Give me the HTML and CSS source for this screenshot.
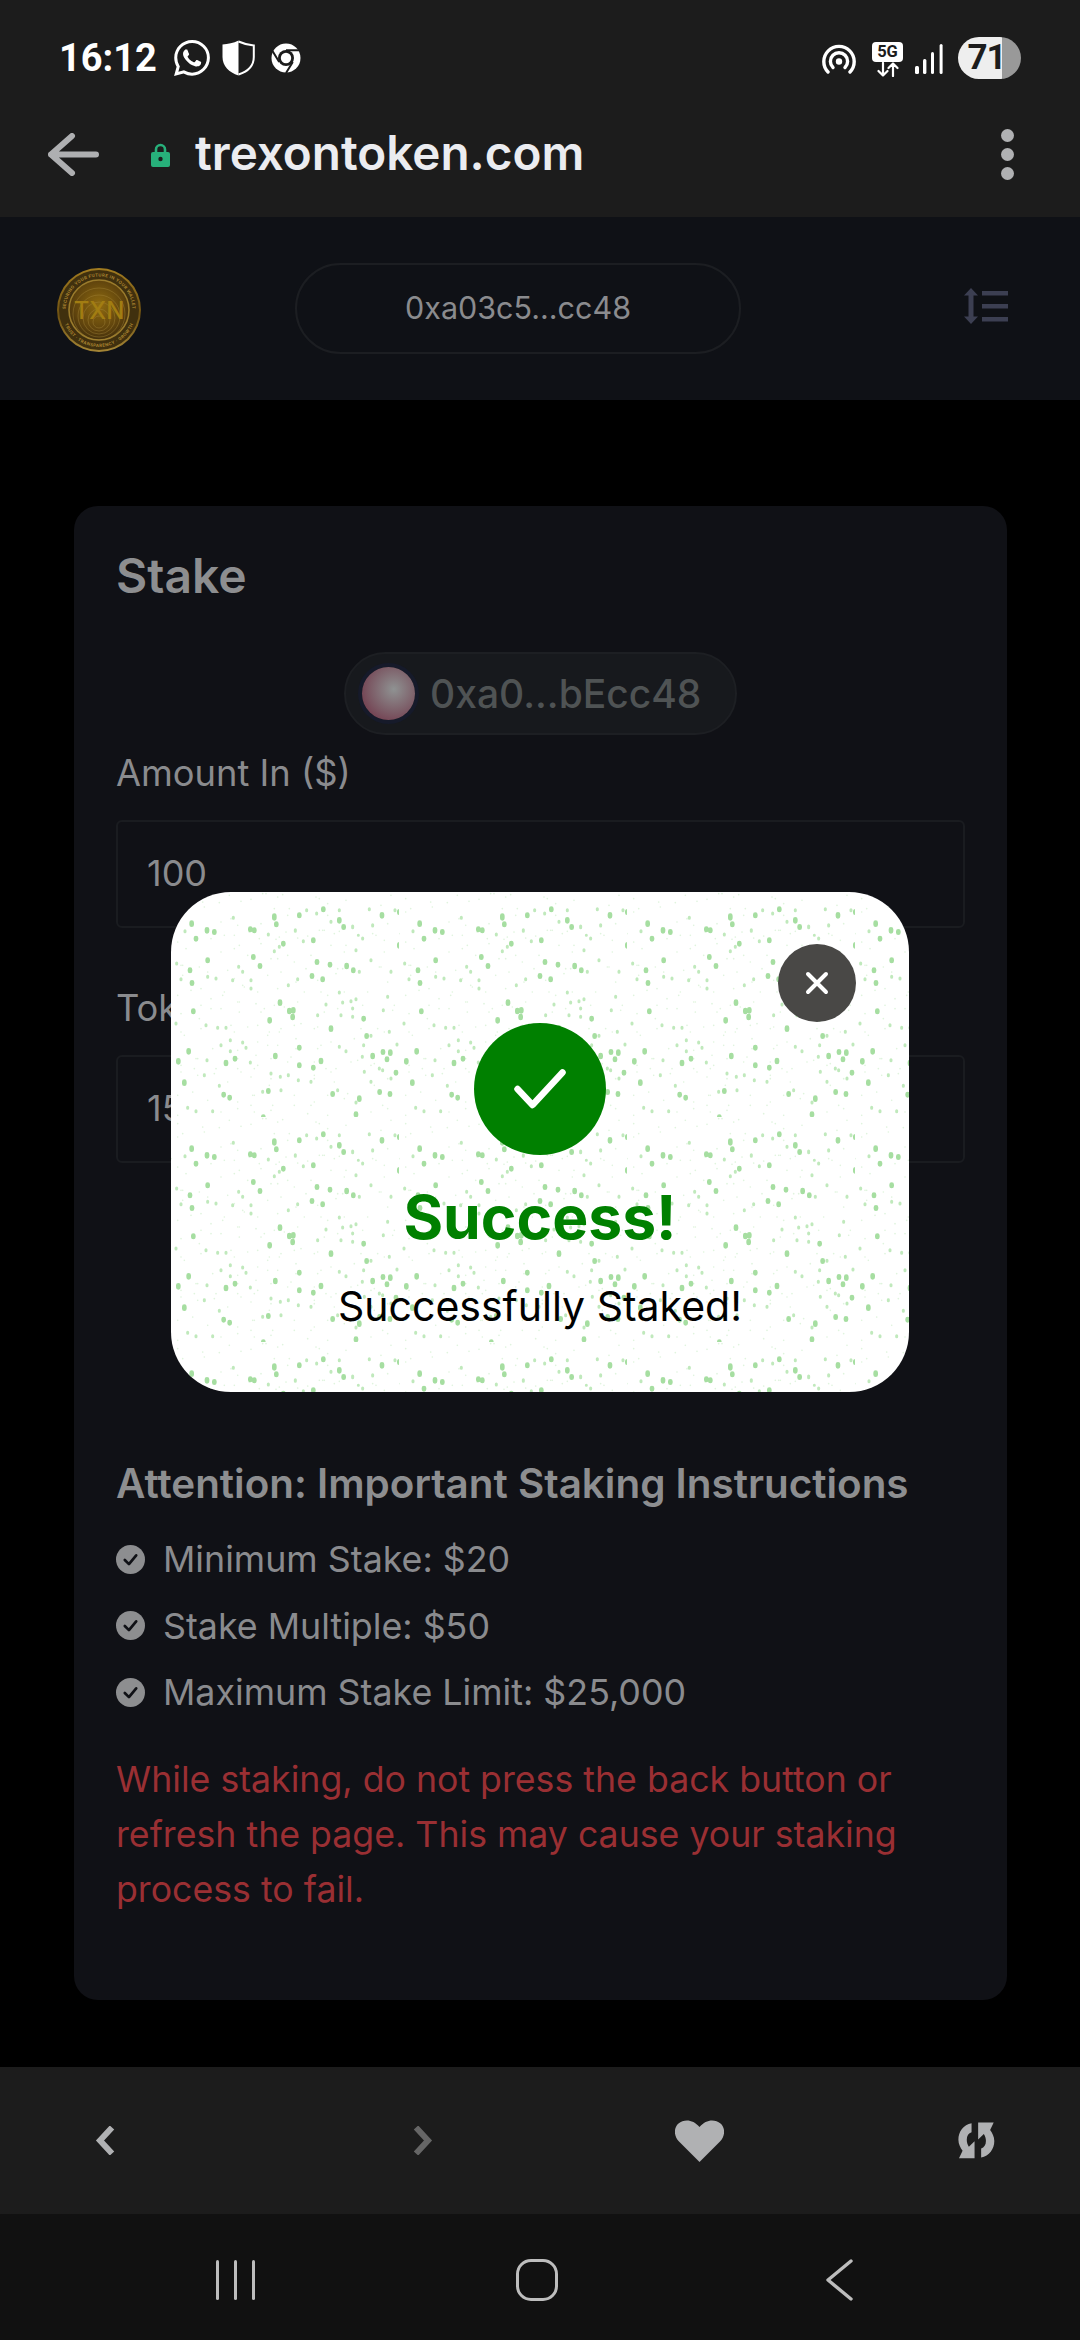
FILE: index.html
```html
<!DOCTYPE html>
<html lang="en">
<head>
<meta charset="utf-8">
<title>trexontoken.com</title>
<link rel="stylesheet" href="styles.css">
</head>
<body>
<div class="app">
  <header class="chrome">
    <div class="status">
      <div class="status-left">
        <span class="time">16:12</span>
        <svg class="ic-wa" viewBox="0 0 24 24"><path fill="#fff" d="M17.472 14.382c-.297-.149-1.758-.867-2.03-.967-.273-.099-.471-.148-.67.15-.197.297-.767.966-.94 1.164-.173.199-.347.223-.644.075-.297-.15-1.255-.463-2.39-1.475-.883-.788-1.48-1.761-1.653-2.059-.173-.297-.018-.458.13-.606.134-.133.298-.347.446-.52.149-.174.198-.298.298-.497.099-.198.05-.371-.025-.52-.075-.149-.669-1.612-.916-2.207-.242-.579-.487-.5-.669-.51-.173-.008-.371-.01-.57-.01-.198 0-.52.074-.792.372-.272.297-1.04 1.016-1.04 2.479 0 1.462 1.065 2.875 1.213 3.074.149.198 2.096 3.2 5.077 4.487.709.306 1.262.489 1.694.625.712.227 1.36.195 1.871.118.571-.085 1.758-.719 2.006-1.413.248-.694.248-1.289.173-1.413-.074-.124-.272-.198-.57-.347m-5.421 7.403h-.004a9.87 9.87 0 01-5.031-1.378l-.361-.214-3.741.982.998-3.648-.235-.374a9.86 9.86 0 01-1.51-5.26c.001-5.45 4.436-9.884 9.888-9.884 2.64 0 5.122 1.03 6.988 2.898a9.825 9.825 0 012.893 6.994c-.003 5.45-4.437 9.884-9.885 9.884m8.413-18.297A11.815 11.815 0 0012.05 0C5.495 0 .16 5.335.157 11.892c0 2.096.547 4.142 1.588 5.945L.057 24l6.305-1.654a11.882 11.882 0 005.683 1.448h.005c6.554 0 11.89-5.335 11.893-11.893a11.821 11.821 0 00-3.48-8.413Z"/></svg>
        <svg class="ic-shield" viewBox="0 0 33 36"><path fill="#fff" d="M16.5 0.5C11.5 3 6 4.2 0.5 4.5V17C0.5 26 7 32.5 16.5 35.5Z"/><path fill="none" stroke="#fff" stroke-width="2" d="M16.5 1.5C21.5 3.8 26.5 5 31.8 5.4V17C31.8 25.6 25.8 31.6 16.5 34.5"/></svg>
        <svg class="ic-chrome" viewBox="0 0 30 30"><circle cx="15" cy="15" r="14.5" fill="#fff"/><circle cx="15" cy="15" r="8" fill="#1c1c1c"/><circle cx="15" cy="15" r="5.2" fill="#fff"/><path fill="none" stroke="#1c1c1c" stroke-width="2" d="M15 7.2H28M21.8 19L15 30M8.2 19L1.5 8"/></svg>
      </div>
      <div class="status-right">
        <svg class="ic-hot" viewBox="0 0 34 30"><g fill="none" stroke="#fff" stroke-width="3.4" stroke-linecap="round"><path d="M6 28C2.8 24.8 1.8 21.5 1.8 17.6A15.2 15.2 0 0 1 32.2 17.6C32.2 21.5 31.2 24.8 28 28"/><path d="M11 23.5A8.6 8.6 0 1 1 23 23.5"/></g><circle cx="17" cy="17.5" r="3.2" fill="#fff"/></svg>
        <div class="five-g">
          <span class="five-g-box">5G</span>
          <svg class="five-g-arrows" viewBox="0 0 24 15"><path fill="none" stroke="#fff" stroke-width="2.2" stroke-linecap="round" stroke-linejoin="round" d="M7 1V13.5M2.5 9L7 13.5L11.5 9M17 14V1.5M12.5 6L17 1.5L21.5 6"/></svg>
        </div>
        <svg class="ic-signal" viewBox="0 0 28 30"><g fill="#fff"><rect x="0" y="22" width="4" height="8" rx="1.5"/><rect x="8" y="15" width="3.4" height="15" rx="1.5"/><rect x="16" y="8" width="3" height="22" rx="1.5"/><rect x="24.6" y="0" width="3" height="30" rx="1.5"/></g></svg>
        <div class="battery"><span class="battery-num">71</span></div>
      </div>
    </div>
    <div class="urlbar">
      <svg class="ic-back" viewBox="0 0 51 43"><path fill="none" stroke="#aeafb1" stroke-width="6" stroke-linecap="round" stroke-linejoin="round" d="M3 21.5H48M24 3L3 21.5L24 40"/></svg>
      <svg class="ic-lock" viewBox="0 0 19 24"><path fill="none" stroke="#27b07a" stroke-width="2.6" d="M5 11V6.5a4.5 4.5 0 0 1 9 0V11"/><rect y="9" width="19" height="15" rx="2" fill="#27b07a"/><circle cx="9.5" cy="16" r="2.2" fill="#1c1c1c"/></svg>
      <span class="url">trexontoken.com</span>
      <div class="kebab"><i></i><i></i><i></i></div>
    </div>
  </header>

  <div class="site-head">
    <svg class="logo" viewBox="0 0 84 84">
      <defs>
        <radialGradient id="coin" cx="50%" cy="42%" r="60%"><stop offset="0" stop-color="#8f6b10"/><stop offset=".7" stop-color="#5f430d"/><stop offset="1" stop-color="#3e2c0c"/></radialGradient>
        <linearGradient id="rim" x1="0" y1="0" x2="0" y2="1"><stop offset="0" stop-color="#a27c20"/><stop offset=".55" stop-color="#6f5212"/><stop offset="1" stop-color="#a58636"/></linearGradient>
        <path id="arcTop" d="M8.5 42A33.5 33.5 0 0 1 75.500 42"/>
        <path id="arcBot" d="M5 42A37 37 0 0 0 79 42"/>
      </defs>
      <circle cx="42" cy="42" r="42" fill="url(#rim)"/>
      <circle cx="42" cy="42" r="40" fill="#40300e"/>
      <circle cx="42" cy="42" r="30" fill="url(#coin)" stroke="#9a7b2c" stroke-width="1.6"/>
      <g fill="none" stroke="#a98b3e" stroke-width=".6" opacity=".65"><circle cx="42" cy="46" r="26"/><circle cx="42" cy="48" r="21"/><circle cx="42" cy="50" r="16"/><circle cx="42" cy="52" r="11"/><circle cx="42" cy="54" r="6"/></g>
      <text class="coin-small"><textPath href="#arcTop" startOffset="50%" text-anchor="middle">SECURING YOUR FUTURE IN YOUR WALLET</textPath></text>
      <text class="coin-small"><textPath href="#arcBot" startOffset="50%" text-anchor="middle">TRUST · TRANSPARENCY · GROWTH</textPath></text>
      <text class="coin-txn" x="42" y="51" text-anchor="middle">TXN</text>
    </svg>
    <div class="addr-pill">0xa03c5...cc48</div>
    <svg class="ic-menu" viewBox="0 0 44 36"><g fill="#3c3f52"><path d="M7 0L14 7.500H9.500V28.500H14L7 36L0 28.500H4.500V7.500H0Z"/><rect x="18" y="3" width="26" height="4.500"/><rect x="18" y="16" width="26" height="4.500"/><rect x="18" y="29" width="26" height="4.500"/></g></svg>
  </div>

  <main class="page">
    <section class="card">
      <h1 class="card-title">Stake</h1>
      <div class="wallet-row">
        <div class="wallet"><span class="avatar"></span><span class="wallet-addr">0xa0...bEcc48</span></div>
      </div>
      <label class="field-label">Amount In ($)</label>
      <div class="input">100</div>
      <label class="field-label second">Token Amount</label>
      <div class="input">15</div>
      <h2 class="att-title">Attention: Important Staking Instructions</h2>
      <ul class="rules">
        <li><svg class="ic-check" viewBox="0 0 28 28"><circle cx="14" cy="14" r="14" fill="#8d8e90"/><path fill="none" stroke="#101116" stroke-width="2.6" stroke-linecap="round" stroke-linejoin="round" d="M8.500 14.500L12.500 18.500L19.500 10"/></svg>Minimum Stake: $20</li>
        <li><svg class="ic-check" viewBox="0 0 28 28"><circle cx="14" cy="14" r="14" fill="#8d8e90"/><path fill="none" stroke="#101116" stroke-width="2.6" stroke-linecap="round" stroke-linejoin="round" d="M8.500 14.500L12.500 18.500L19.500 10"/></svg>Stake Multiple: $50</li>
        <li><svg class="ic-check" viewBox="0 0 28 28"><circle cx="14" cy="14" r="14" fill="#8d8e90"/><path fill="none" stroke="#101116" stroke-width="2.6" stroke-linecap="round" stroke-linejoin="round" d="M8.500 14.500L12.500 18.500L19.500 10"/></svg>Maximum Stake Limit: $25,000</li>
      </ul>
      <p class="warning">While staking, do not press the back button or refresh the page. This may cause your staking process to fail.</p>
    </section>
  </main>

  <div class="toolbar">
    <svg class="ic-chev" viewBox="0 0 20 29"><path fill="none" stroke="#b0b1b3" stroke-width="6" stroke-linejoin="miter" d="M17 1.500L5 14.500L17 27.500"/></svg>
    <svg class="ic-chev fwd" viewBox="0 0 20 29"><path fill="none" stroke="#666" stroke-width="6" stroke-linejoin="miter" d="M3 1.500L15 14.500L3 27.500"/></svg>
    <svg class="ic-heart" viewBox="0 0 49 42"><path fill="#b0b1b3" d="M24.500 42L4 21.500C-1.500 16 -1.300 7.500 3.500 3.500C9 -1.200 18 -1 24.500 7C31 -1 40 -1.200 45.500 3.500C50.300 7.500 50.500 16 45 21.500Z"/></svg>
    <svg class="ic-sync" viewBox="70 30 137 135"><g fill="#b0b1b3"><path d="M122 40C95 45 78 68 78 95C78 110 85 122 92 132L80 157H132V100L113 118C108 110 106 103 106 95C106 82 112 73 122 70Z"/><path d="M154 154C181 149 198 126 198 99C198 84 191 72 184 62L196 37H144V94L163 76C168 84 170 91 170 99C170 112 164 121 154 124Z"/></g></svg>
  </div>
  <nav class="sysnav">
    <div class="nav-recent"><i></i><i></i><i></i></div>
    <div class="nav-home"></div>
    <svg class="ic-navback" viewBox="0 0 27 42"><path fill="none" stroke="#bdbdbd" stroke-width="3.400" stroke-linecap="round" stroke-linejoin="round" d="M25 2L2 21L25 40"/></svg>
  </nav>

  <div class="modal">
    <svg class="speckle" aria-hidden="true">
      <defs>
        <pattern id="sp" patternUnits="userSpaceOnUse" width="228" height="225">
          <g transform="scale(.3333)" fill="none" stroke-linecap="round">
            <path id="spFine" stroke="#e0f4de" stroke-width="5" d="M20 20h.1M95 30h.1M145 32h.1M210 28h.1M240 22h.1M275 5h.1M335 8h.1M355 50h.1M435 15h.1M470 35h.1M525 25h.1M630 40h.1M660 10h.1M20 60h.1M150 90h.1M200 100h.1M270 95h.1M345 120h.1M455 115h.1M490 125h.1M615 130h.1M650 95h.1M20 150h.1M45 170h.1M150 180h.1M205 160h.1M270 155h.1M350 190h.1M480 160h.1M520 180h.1M640 180h.1M30 220h.1M85 225h.1M170 235h.1M290 250h.1M330 240h.1M405 230h.1M495 245h.1M630 225h.1M20 310h.1M60 295h.1M120 320h.1M160 300h.1M205 330h.1M280 350h.1M400 300h.1M470 310h.1M590 300h.1M670 340h.1M30 365h.1M85 380h.1M120 350h.1M205 360h.1M260 400h.1M325 420h.1M390 395h.1M430 410h.1M620 410h.1M40 430h.1M75 500h.1M125 470h.1M260 450h.1M320 460h.1M440 470h.1M480 450h.1M550 440h.1M30 540h.1M70 530h.1M130 545h.1M200 530h.1M260 520h.1M350 510h.1M465 530h.1M540 510h.1M610 515h.1M20 610h.1M65 600h.1M110 625h.1M200 630h.1M250 610h.1M305 640h.1M370 610h.1M420 640h.1M470 610h.1M530 605h.1M650 650h.1M20 670h.1M150 660h.1M250 660h.1M340 680h.1M410 665h.1M470 670h.1M600 660h.1"/>
            <use href="#spFine" transform="translate(170 110)"/>
            <use href="#spFine" transform="translate(-170 -110)"/>
            <path stroke="#c0e9bc" stroke-width="9" d="M42 116v3M187 76v3M292 126v3M310 176v3M325 163v3M373 113v5M397 146v3M437 63v3M407 53v3M545 102v5M562 130h.1M605 98v4M595 50v3M672 53v3M505 53v3M480 88v3M555 173v3M575 138v3M600 203v3M660 238v3M565 238v3M203 223v3M215 238v3M240 288v3M185 263v3M135 258v3M110 253v3M30 260v3M17 213v3M240 263v3M352 278v3M380 260v3M505 300v3M555 320v3M540 326v3M515 330v3M465 336v3M440 368v3M545 373v3M545 348v3M637 353v3M510 368v3M650 313v3M140 406v3M165 406v3M105 398v3M15 393v3M178 443v3M150 458v3M215 450v3M225 466v3M178 476v3M238 510v3M108 503v3M100 548v3M145 580v3M300 543v3M328 553v3M352 548v3M382 563v3M420 568v3M505 463v3M525 476v3M580 538v3M600 568v3M655 418v3M678 456v3M600 430v3M574 493v3M578 458v3M635 533v3M660 558v3M625 528v3M275 598v3M330 593v3M555 630v3M500 593v3M75 656v3M125 656v3M50 646v3M90 683v3"/>
            <path stroke="#a6dea1" stroke-width="14" d="M62 92v6M75 138v4M108 112v6M130 118v4M238 110v4M250 113v4M310 71v8M316 95v4M337 153v4M385 68v4M427 143v4M457 50v4M505 82v6M518 103v4M633 67v6M685 58v4M685 157v6M720 82v6M745 55v6M790 112v6M247 193v4M267 220v4M110 203v4M57 233v4M63 271v4M438 208v4M477 216v4M527 219v6M547 233v4M423 250v4M455 260v4M327 329v6M67 356v4M296 382v6M355 354v6M367 352v6M365 372v6M480 407v6M578 378v4M587 430v4M385 465v4M313 489v6M53 475v6M22 505v6M165 510v6M192 498v4M385 518v4M427 525v4M450 504v6M605 489v6M648 500v4M658 479v6M636 478v4M675 540v4M704 505v6M734 475v6M720 569v6M40 569v6M626 598v4M657 604v4M485 604v4M565 617v6M176 615v4M158 606v4M277 674v6M555 665v4M292 595v4"/>
          </g>
        </pattern>
      </defs>
      <rect class="speckle-fill" width="738" height="500"/>
    </svg>
    <button class="close" type="button" aria-label="Close"><svg viewBox="0 0 24 24"><path fill="none" stroke="#fff" stroke-width="4" stroke-linecap="round" d="M3 3L21 21M21 3L3 21"/></svg></button>
    <div class="modal-body">
      <div class="ok-circle"><svg viewBox="0 0 52 40"><path fill="none" stroke="#fff" stroke-width="6.500" stroke-linecap="round" stroke-linejoin="round" d="M3.500 20L18.500 36L48.500 3.500"/></svg></div>
      <div class="ok-title">Success!</div>
      <div class="ok-text">Successfully Staked!</div>
    </div>
  </div>
</div>
</body>
</html>
```
FILE: styles.css
```css
* { box-sizing: border-box; }
html, body { margin: 0; padding: 0; background: #000; }
body { font-family: Inter, "Noto Sans", sans-serif; }
.app { position: relative; width: 1080px; height: 2340px; display: flex; flex-direction: column; overflow: hidden; background: #000; }
svg { display: block; flex: none; }

/* browser chrome */
.chrome { height: 217px; background: #1c1c1c; flex: none; }
.status { height: 116px; padding: 36px 59px 0 59px; display: flex; justify-content: space-between; align-items: flex-start; }
.status-left { display: flex; align-items: center; height: 44px; }
.time { font-family: Roboto, sans-serif; font-weight: 700; font-size: 38px; color: #fff; line-height: 44px; width: 115px; }
.ic-wa { width: 36px; height: 36px; margin-right: 12px; }
.ic-shield { width: 33px; height: 36px; margin-right: 16px; }
.ic-chrome { width: 30px; height: 30px; }
.status-right { display: flex; align-items: center; height: 44px; }
.ic-hot { width: 34px; height: 30px; margin-right: 16px; margin-top: 2px; }
.five-g { width: 31px; margin-right: 12px; display: flex; flex-direction: column; align-items: center; margin-top: 2px; }
.five-g-box { width: 31px; height: 20px; border-radius: 4px; background: #fff; color: #1c1c1c; font: 700 16.5px/20px Roboto, sans-serif; text-align: center; }
.five-g-arrows { width: 24px; height: 15px; }
.ic-signal { width: 28px; height: 30px; margin-right: 15px; margin-top: 2px; }
.battery { width: 63px; height: 42px; border-radius: 21px; background: linear-gradient(90deg, #eeeeee 0 44px, #999 44px); display: flex; align-items: center; justify-content: center; padding-right: 6px; }
.battery-num { font: 700 35px/42px Roboto, sans-serif; color: #1c1c1c; letter-spacing: -1px; }

.urlbar { height: 101px; display: flex; align-items: center; padding: 0 0 24px 48px; position: relative; }
.ic-back { width: 51px; height: 43px; margin-right: 52px; }
.ic-lock { width: 19px; height: 24px; margin-right: 25px; }
.url { font-weight: 600; font-size: 47.6px; color: #ebecf0; line-height: 60px; flex: 1; margin-bottom: 4px; }
.kebab { display: flex; flex-direction: column; gap: 6px; margin-right: 66px; }
.kebab i { display: block; width: 13px; height: 13px; border-radius: 50%; background: #b0b1b3; }

/* site header */
.site-head { height: 183px; flex: none; background: #0f1116; display: flex; align-items: center; padding: 0 72px 0 57px; }
.logo { width: 84px; height: 84px; margin: 2px 154px 0 0; }
.coin-small { font: 700 4.300px Inter, sans-serif; fill: #a98330; letter-spacing: .35px; }
.coin-txn { font: 500 24px Inter, sans-serif; fill: #a27d12; }
.addr-pill { width: 446px; height: 91px; border: 2px solid #1c1e22; border-radius: 46px; display: flex; align-items: center; justify-content: center; color: #8a8b8e; font-size: 30.5px; padding-bottom: 2px; }
.ic-menu { width: 44px; height: 36px; margin: 0 0 5px auto; }

/* content */
.page { flex: 1; min-height: 0; padding: 106px 73px 0 74px; background: #000; }
.card { height: 1494px; background: #101116; border-radius: 24px; padding: 40px 42px 0 42px; }
.card-title { margin: 0; font-size: 48px; font-weight: 600; color: #8d8e90; line-height: 60px; }
.wallet-row { display: flex; justify-content: center; margin-top: 46px; }
.wallet { width: 393px; height: 83px; border-radius: 42px; background: #17191d; border: 2px solid #1d1f23; display: flex; align-items: center; padding-left: 16px; gap: 15px; }
.avatar { width: 53px; height: 53px; border-radius: 50%; background: radial-gradient(circle at 60% 42%, #8f9292 0, #7d5f69 50%, #6d2a40 100%); box-shadow: 0 0 0 4px #161a2a; }
.wallet-addr { font-size: 39px; font-weight: 500; color: #4f5354; }
.field-label { display: block; margin-top: 13px; font-size: 36.3px; line-height: 50px; color: #8a8b8e; }
.field-label.second { margin-top: 55px; }
.input { height: 108px; margin-top: 22px; border: 2px solid #1a1c20; border-radius: 6px; padding: 0 0 2px 29px; display: flex; align-items: center; font-size: 36px; color: #8a8b8e; }
.att-title { margin: 296px 0 0; font-size: 40.4px; font-weight: 600; color: #8d8e90; line-height: 50px; }
.rules { list-style: none; margin: 17px 0 0; padding: 0; }
.rules li { display: flex; align-items: center; height: 66.500px; font-size: 35.8px; color: #8a8b8e; gap: 18px; }
.ic-check { width: 29px; height: 29px; }
.warning { margin: 26px 0 0; font-size: 35.7px; line-height: 55px; color: #9a2f33; }

/* bottom bars */
.toolbar { height: 147px; flex: none; background: #1c1c1c; display: flex; align-items: center; padding: 0 0 0 95px; }
.ic-chev { width: 20px; height: 29px; }
.ic-chev.fwd { margin-left: 298px; }
.ic-heart { width: 49px; height: 42px; margin-left: 242px; }
.ic-sync { width: 41px; height: 41px; margin-left: 232px; }
.sysnav { height: 126px; flex: none; background: #111; display: flex; align-items: center; padding: 6px 0 0 216px; }
.nav-recent { display: flex; gap: 15px; width: 39px; }
.nav-recent i { display: block; width: 3px; height: 40px; background: #bdbdbd; border-radius: 2px; }
.nav-home { width: 42px; height: 42px; border: 3.500px solid #bdbdbd; border-radius: 15px; margin-left: 261px; }
.ic-navback { width: 27px; height: 42px; margin-left: 268px; }

/* success modal */
.modal { position: absolute; left: 171px; top: 892px; width: 738px; height: 500px; border-radius: 60px; background: #fff; overflow: hidden; }
.speckle { position: absolute; left: 0; top: 0; width: 738px; height: 500px; }
.speckle-fill { fill: url(#sp); }
.close { position: absolute; left: 607px; top: 52px; width: 78px; height: 78px; border-radius: 50%; background: #494846; border: 0; padding: 0; display: flex; align-items: center; justify-content: center; }
.close svg { width: 24px; height: 24px; }
.modal-body { position: relative; display: flex; flex-direction: column; align-items: center; padding-top: 131px; }
.ok-circle { width: 132px; height: 132px; border-radius: 50%; background: #008000; display: flex; align-items: center; justify-content: center; }
.ok-circle svg { width: 52px; height: 40px; }
.ok-title { margin-top: 22px; font-size: 60.6px; font-weight: 700; line-height: 80px; color: #008000; }
.ok-text { margin-top: 23px; font-size: 41px; line-height: 52px; color: #000; }
```
